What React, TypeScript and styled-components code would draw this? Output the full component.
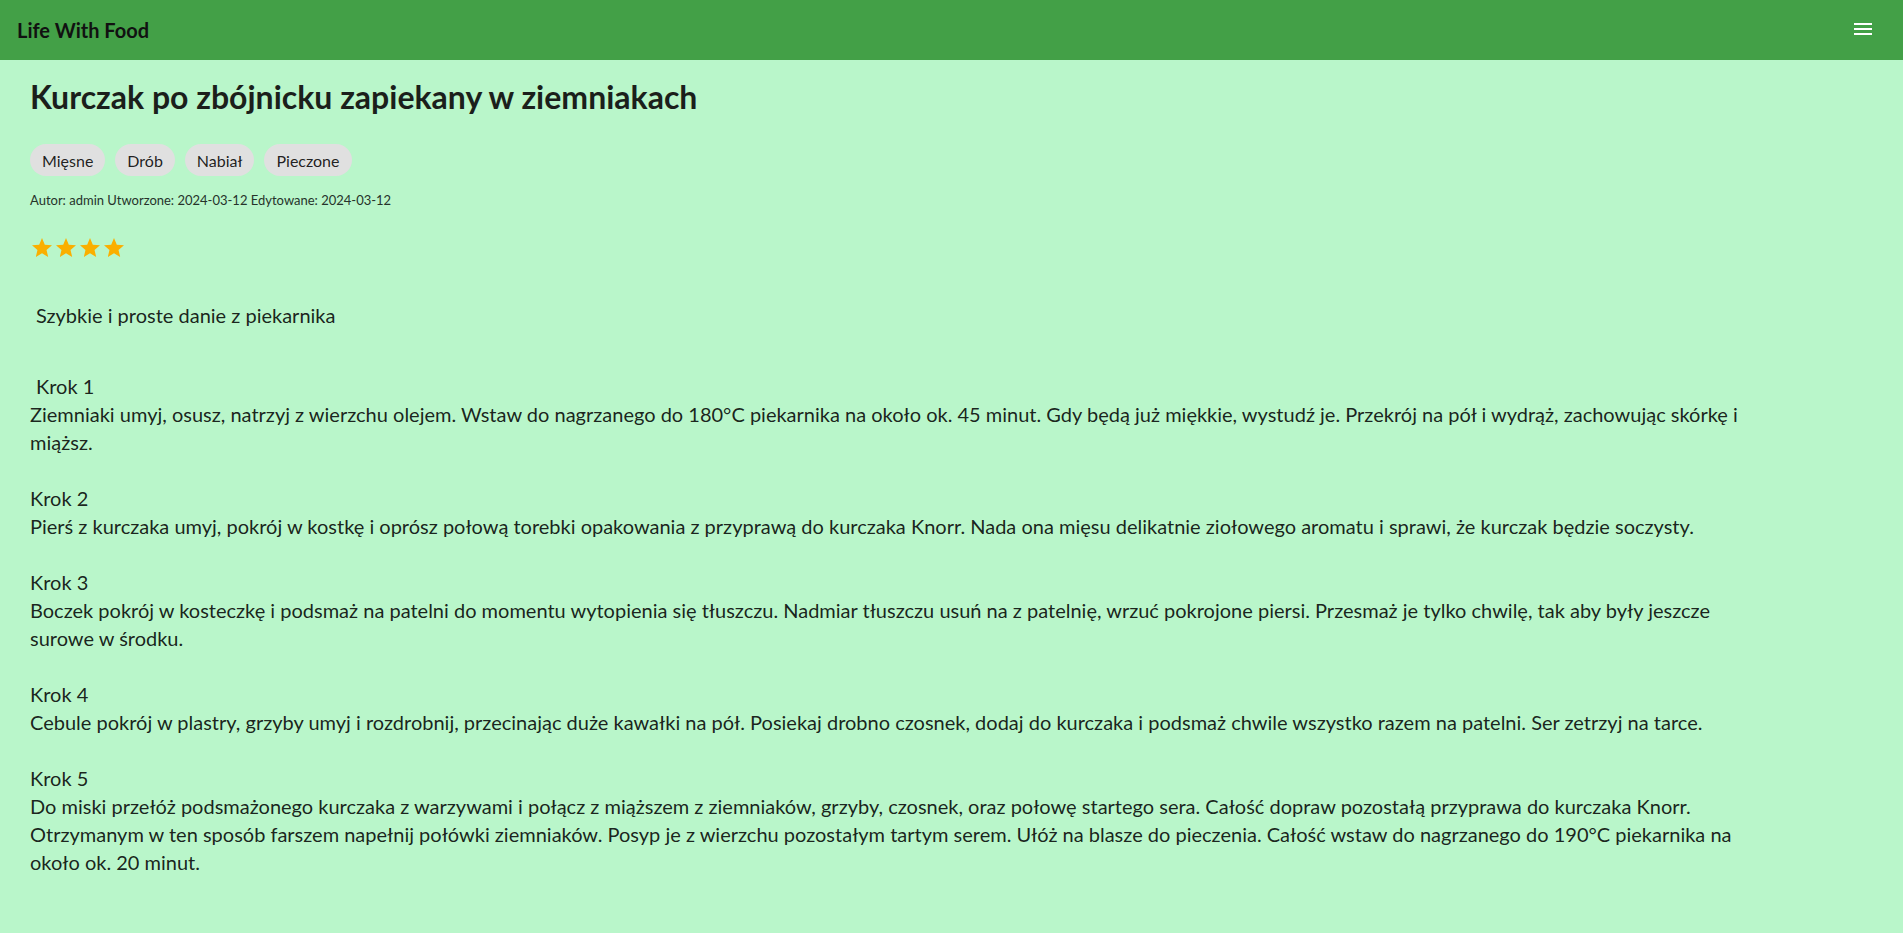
import React from "react";
import styled, { createGlobalStyle } from "styled-components";

const GlobalStyle = createGlobalStyle`
  html, body {
    margin: 0;
    padding: 0;
    background: #b9f6ca;
  }
  body {
    font-family: Lato, "Open Sans", sans-serif;
    color: rgba(0, 0, 0, 0.87);
  }
  * { box-sizing: border-box; }
`;

const Page = styled.div`
  min-height: 933px;
  background: #b9f6ca;
`;

const TopBar = styled.header`
  height: 60px;
  background: #43a047;
  display: flex;
  align-items: center;
  justify-content: space-between;
  padding: 0 28px 0 17px;
`;

const Brand = styled.div`
  font-family: Lato, sans-serif;
  font-weight: 700;
  font-size: 20px;
  color: #111;
  line-height: 1;
`;

const MenuButton = styled.button`
  width: 24px;
  height: 24px;
  padding: 0;
  border: 0;
  background: transparent;
  display: flex;
  align-items: center;
  justify-content: center;
  cursor: pointer;
  margin-top: -2px;
`;

const Main = styled.main`
  padding: 18px 30px 40px;
  display: flex;
  flex-direction: column;
`;

const Title = styled.h1`
  margin: 0;
  font-size: 32px;
  font-weight: 700;
  line-height: 1.2;
  color: #1b1f1b;
`;

const Tags = styled.div`
  display: flex;
  gap: 10px;
  margin-top: 28px;
`;

const Tag = styled.span`
  height: 32px;
  padding: 0 12px;
  border-radius: 16px;
  background: #e0e0e0;
  display: inline-flex;
  align-items: center;
  font-size: 16px;
  color: rgba(0, 0, 0, 0.87);
`;

const Meta = styled.div`
  margin-top: 17px;
  font-size: 13px;
  line-height: 1.2;
  color: #26332a;
`;

const Stars = styled.div`
  margin-top: 27px;
  display: flex;
  height: 24px;
`;

const Description = styled.p`
  margin: 41px 0 0;
  padding-left: 6px;
  font-size: 20px;
  line-height: 28px;
`;

const Steps = styled.div`
  margin-top: 43px;
  display: flex;
  flex-direction: column;
  gap: 28px;
  max-width: 1730px;
`;

const Step = styled.div`
  font-size: 20px;
  line-height: 28px;
`;

const StepTitle = styled.div<{ $indent?: boolean }>`
  padding-left: ${(p) => (p.$indent ? "6px" : "0")};
`;

const StepText = styled.div``;

const Star = () => (
  <svg width="24" height="24" viewBox="0 0 24 24" fill="#faaf00">
    <path d="M12 17.27 18.18 21l-1.64-7.03L22 9.24l-7.19-.61L12 2 9.19 8.63 2 9.24l5.46 4.73L5.82 21z" />
  </svg>
);

const steps = [
  "Ziemniaki umyj, osusz, natrzyj z wierzchu olejem. Wstaw do nagrzanego do 180°C piekarnika na około ok. 45 minut. Gdy będą już miękkie, wystudź je. Przekrój na pół i wydrąż, zachowując skórkę i miąższ.",
  "Pierś z kurczaka umyj, pokrój w kostkę i oprósz połową torebki opakowania z przyprawą do kurczaka Knorr. Nada ona mięsu delikatnie ziołowego aromatu i sprawi, że kurczak będzie soczysty.",
  "Boczek pokrój w kosteczkę i podsmaż na patelni do momentu wytopienia się tłuszczu. Nadmiar tłuszczu usuń na z patelnię, wrzuć pokrojone piersi. Przesmaż je tylko chwilę, tak aby były jeszcze surowe w środku.",
  "Cebule pokrój w plastry, grzyby umyj i rozdrobnij, przecinając duże kawałki na pół. Posiekaj drobno czosnek, dodaj do kurczaka i podsmaż chwile wszystko razem na patelni. Ser zetrzyj na tarce.",
  "Do miski przełóż podsmażonego kurczaka z warzywami i połącz z miąższem z ziemniaków, grzyby, czosnek, oraz połowę startego sera. Całość dopraw pozostałą przyprawa do kurczaka Knorr. Otrzymanym w ten sposób farszem napełnij połówki ziemniaków. Posyp je z wierzchu pozostałym tartym serem. Ułóż na blasze do pieczenia. Całość wstaw do nagrzanego do 190°C piekarnika na około ok. 20 minut.",
];

export default function App() {
  return (
    <Page>
      <GlobalStyle />
      <TopBar>
        <Brand>Life With Food</Brand>
        <MenuButton aria-label="menu">
          <svg width="24" height="24" viewBox="0 0 24 24" fill="#ffffff">
            <path d="M3 18h18v-2H3v2zm0-5h18v-2H3v2zm0-7v2h18V6H3z" />
          </svg>
        </MenuButton>
      </TopBar>
      <Main>
        <Title>Kurczak po zbójnicku zapiekany w ziemniakach</Title>
        <Tags>
          <Tag>Mięsne</Tag>
          <Tag>Drób</Tag>
          <Tag>Nabiał</Tag>
          <Tag>Pieczone</Tag>
        </Tags>
        <Meta>Autor: admin Utworzone: 2024-03-12 Edytowane: 2024-03-12</Meta>
        <Stars>
          <Star />
          <Star />
          <Star />
          <Star />
        </Stars>
        <Description>Szybkie i proste danie z piekarnika</Description>
        <Steps>
          {steps.map((s, i) => (
            <Step key={i}>
              <StepTitle $indent={i === 0}>Krok {i + 1}</StepTitle>
              <StepText>{s}</StepText>
            </Step>
          ))}
        </Steps>
      </Main>
    </Page>
  );
}
